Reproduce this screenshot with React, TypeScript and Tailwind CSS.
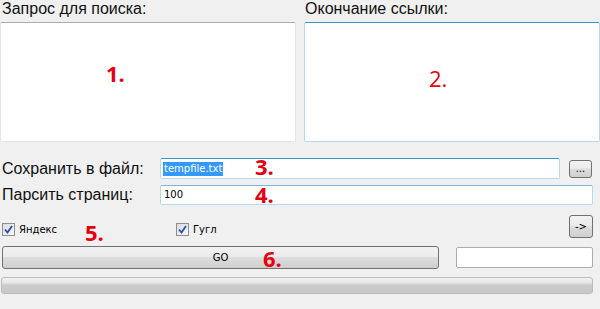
import React from 'react';

const label = "font-['Liberation_Sans',Arial,sans-serif] text-[16px] leading-none text-[#111]";
const small = "font-['DejaVu_Sans',Tahoma,sans-serif] text-[10px] leading-none text-black";
const mark = "absolute font-['Open_Sans',sans-serif] text-[22px] leading-none text-[#e60012]";

function Btn({ w, h, children }: { w: string; h: string; children?: React.ReactNode }) {
  return (
    <div
      className={`${w} ${h} flex items-center justify-center rounded-[3px] border border-[#707070] bg-[linear-gradient(#f2f2f2_0%,#ebebeb_45%,#dddddd_50%,#cfcfcf_100%)] ${small}`}
    >
      {children}
    </div>
  );
}

function Check({ text }: { text: string }) {
  return (
    <div className="flex items-center gap-[4px]">
      <div className="w-[13px] h-[13px] border border-[#8e8f8f] bg-[linear-gradient(135deg,#dcdcdc,#f8f8f8)] flex items-center justify-center">
        <svg width="9" height="9" viewBox="0 0 9 9">
          <path d="M1 4.5 L3.5 7.5 L8 1" fill="none" stroke="#2a4ea8" strokeWidth="1.8" />
        </svg>
      </div>
      <span className={small}>{text}</span>
    </div>
  );
}

export default function App() {
  return (
    <div className="relative w-[600px] h-[309px] bg-[#f0f0f0] overflow-hidden">
      {/* top two text areas */}
      <div className="flex gap-[8px]">
        <div className="w-[296px] flex flex-col">
          <div className={`${label} h-[22px] pl-[2px] pt-[1px]`}>Запрос для поиска:</div>
          <div className="h-[120px] bg-white border border-[#e2e6ea] border-t-[#abadb3] rounded-[2px]" />
        </div>
        <div className="w-[296px] flex flex-col">
          <div className={`${label} h-[22px] pl-[1px] pt-[1px]`}>Окончание ссылки:</div>
          <div className="h-[120px] bg-white border border-[#b7d9ef] border-t-[#3d94c6] rounded-[2px]" />
        </div>
      </div>

      {/* save to file */}
      <div className="flex items-center mt-[16px] h-[21px]">
        <div className={`${label} w-[160px] pl-[2px]`}>Сохранить в файл:</div>
        <div className="w-[400px] h-[21px] bg-white border border-[#b7d9ef] border-t-[#3d94c6] rounded-[2px] flex items-center pl-[2px]">
          <span className={`${small} bg-[#3399ff] text-white px-[1px] py-[2px]`}>tempfile.txt</span>
        </div>
        <div className="ml-[9px]">
          <Btn w="w-[23px]" h="h-[18px]">...</Btn>
        </div>
      </div>

      {/* pages */}
      <div className="flex items-center mt-[6px] h-[20px]">
        <div className={`${label} w-[160px] pl-[2px]`}>Парсить страниц:</div>
        <div className="w-[433px] h-[20px] bg-white border border-[#b7d9ef] border-t-[#7eb4d8] rounded-[2px] flex items-center pl-[3px]">
          <span className={small}>100</span>
        </div>
      </div>

      {/* checkboxes */}
      <div className="flex items-end mt-[10px] h-[23px]">
        <div className="w-[176px] pl-[2px] pb-[2px]">
          <Check text="Яндекс" />
        </div>
        <div className="w-[393px] pb-[2px]">
          <Check text="Гугл" />
        </div>
        <Btn w="w-[24px]" h="h-[23px]">-&gt;</Btn>
      </div>

      {/* go */}
      <div className="flex items-center mt-[8px] h-[23px] pl-[2px]">
        <Btn w="w-[437px]" h="h-[23px]">GO</Btn>
        <div className="ml-[17px] w-[137px] h-[21px] bg-white border border-[#acacac] rounded-[2px]" />
      </div>

      {/* progress */}
      <div className="mt-[8px] ml-[1px] w-[592px] h-[17px] rounded-[3px] border border-[#bcbcbc] bg-[linear-gradient(#f3f3f3_0%,#e6e6e6_30%,#cbcbcb_50%,#c8c8c8_100%)]" />

      {/* annotation numbers */}
      <span className={`${mark} font-bold left-[106px] top-[62px]`}>1.</span>
      <span className={`${mark} left-[429px] top-[67px]`}>2.</span>
      <span className={`${mark} font-bold left-[255px] top-[155px]`}>3.</span>
      <span className={`${mark} font-bold left-[255px] top-[183px]`}>4.</span>
      <span className={`${mark} font-bold left-[85px] top-[221px]`}>5.</span>
      <span className={`${mark} font-bold left-[263px] top-[247px]`}>6.</span>
    </div>
  );
}
